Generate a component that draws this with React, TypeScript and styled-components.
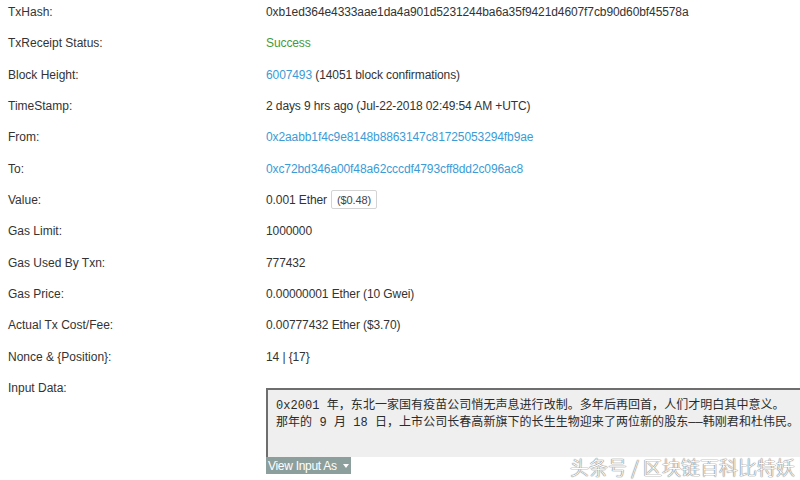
import { FC, Fragment } from 'react';
import styled, { createGlobalStyle } from 'styled-components';

const GlobalStyle = createGlobalStyle`
	html, body {
		margin: 0;
		padding: 0;
		background: #ffffff;
		overflow: hidden;
	}
	body {
		font-family: Arial, "Liberation Sans", "Noto Sans CJK SC", sans-serif;
		font-size: 12px;
		color: #333333;
	}
`;

const Page = styled.div`
	position: relative;
	width: 800px;
	height: 480px;
	overflow: hidden;
	padding-left: 8px;
	box-sizing: border-box;
`;

const List = styled.div`
	display: grid;
	grid-template-columns: 258px 1fr;
	grid-auto-rows: 31.33px;
	margin-top: -3.7px;
`;

const Label = styled.div`
	display: flex;
	align-items: center;
	white-space: nowrap;
`;

const Value = styled.div<{ $tone?: 'link' | 'ok' }>`
	display: flex;
	align-items: center;
	gap: 4px;
	white-space: nowrap;
	letter-spacing: -0.1px;
	color: ${({ $tone }) =>
		$tone === 'link' ? '#3a9bd6' : $tone === 'ok' ? '#3f9a3f' : '#333333'};
`;

const Link = styled.a`
	color: #3a9bd6;
	text-decoration: none;
`;

const Price = styled.span`
	display: inline-flex;
	align-items: center;
	height: 17px;
	padding: 0 5px;
	border: 1px solid #d4d4d4;
	border-radius: 2px;
	font-size: 11px;
	color: #444;
`;

const InputRow = styled.div`
	display: grid;
	grid-template-columns: 258px 1fr;
`;

const InputLabel = styled.div`
	line-height: 16px;
	margin-top: 8px;
`;

const InputBlock = styled.div`
	display: flex;
	flex-direction: column;
	align-items: flex-start;
	margin-top: 16px;
`;

const DataBox = styled.div`
	width: 560px;
	height: 69px;
	background: #efefef;
	border-top: 2px solid #6e6e6e;
	border-left: 2px solid #6e6e6e;
	padding: 8px 0 0 8px;
	box-sizing: border-box;
	font-family: "Liberation Mono", "Noto Sans CJK SC", monospace;
	font-size: 12px;
	letter-spacing: 0.05px;
	line-height: 17px;
	color: #2b2b2b;
	white-space: nowrap;
`;

const ViewButton = styled.button`
	display: flex;
	align-items: center;
	gap: 6px;
	height: 17px;
	width: 85px;
	margin: 0;
	padding: 0 0 0 2px;
	border: none;
	background: #8c9f9c;
	color: #ffffff;
	font-family: Arial, "Liberation Sans", sans-serif;
	font-size: 12px;
	letter-spacing: -0.3px;
`;

const Caret = styled.span`
	width: 0;
	height: 0;
	border-left: 3px solid transparent;
	border-right: 3px solid transparent;
	border-top: 4px solid #ffffff;
`;

const Watermark = styled.div`
	position: absolute;
	left: 570px;
	top: 453px;
	font-family: "Noto Sans CJK SC", sans-serif;
	font-size: 19px;
	font-weight: 300;
	color: #ffffff;
	text-shadow: 0 0 1px #777, 0 0 1px #777, 0 0 1px #999;
	white-space: nowrap;
`;

type Row = { label: string; value: React.ReactNode; tone?: 'link' | 'ok' };

const rows: Row[] = [
	{ label: 'TxHash:', value: '0xb1ed364e4333aae1da4a901d5231244ba6a35f9421d4607f7cb90d60bf45578a' },
	{ label: 'TxReceipt Status:', value: 'Success', tone: 'ok' },
	{
		label: 'Block Height:',
		value: (
			<span>
				<Link href="#">6007493</Link> (14051 block confirmations)
			</span>
		),
	},
	{ label: 'TimeStamp:', value: '2 days 9 hrs ago (Jul-22-2018 02:49:54 AM +UTC)' },
	{ label: 'From:', value: '0x2aabb1f4c9e8148b8863147c81725053294fb9ae', tone: 'link' },
	{ label: 'To:', value: '0xc72bd346a00f48a62cccdf4793cff8dd2c096ac8', tone: 'link' },
	{
		label: 'Value:',
		value: (
			<>
				<span>0.001 Ether</span>
				<Price>($0.48)</Price>
			</>
		),
	},
	{ label: 'Gas Limit:', value: '1000000' },
	{ label: 'Gas Used By Txn:', value: '777432' },
	{ label: 'Gas Price:', value: '0.00000001 Ether (10 Gwei)' },
	{ label: 'Actual Tx Cost/Fee:', value: '0.00777432 Ether ($3.70)' },
	{ label: 'Nonce & {Position}:', value: '14 | {17}' },
];

const App: FC = () => (
	<Page>
		<GlobalStyle />
		<List>
			{rows.map((r) => (
				<Fragment key={r.label}>
					<Label>{r.label}</Label>
					<Value $tone={r.tone}>{r.value}</Value>
				</Fragment>
			))}
		</List>
		<InputRow>
			<InputLabel>Input Data:</InputLabel>
			<InputBlock>
				<DataBox>
					<div>0x2001 年，东北一家国有疫苗公司悄无声息进行改制。多年后再回首，人们才明白其中意义。</div>
					<div>那年的 9 月 18 日，上市公司长春高新旗下的长生生物迎来了两位新的股东——韩刚君和杜伟民。</div>
				</DataBox>
				<ViewButton>
					View Input As <Caret />
				</ViewButton>
			</InputBlock>
		</InputRow>
		<Watermark>头条号 / 区块链百科比特妖</Watermark>
	</Page>
);

export default App;
